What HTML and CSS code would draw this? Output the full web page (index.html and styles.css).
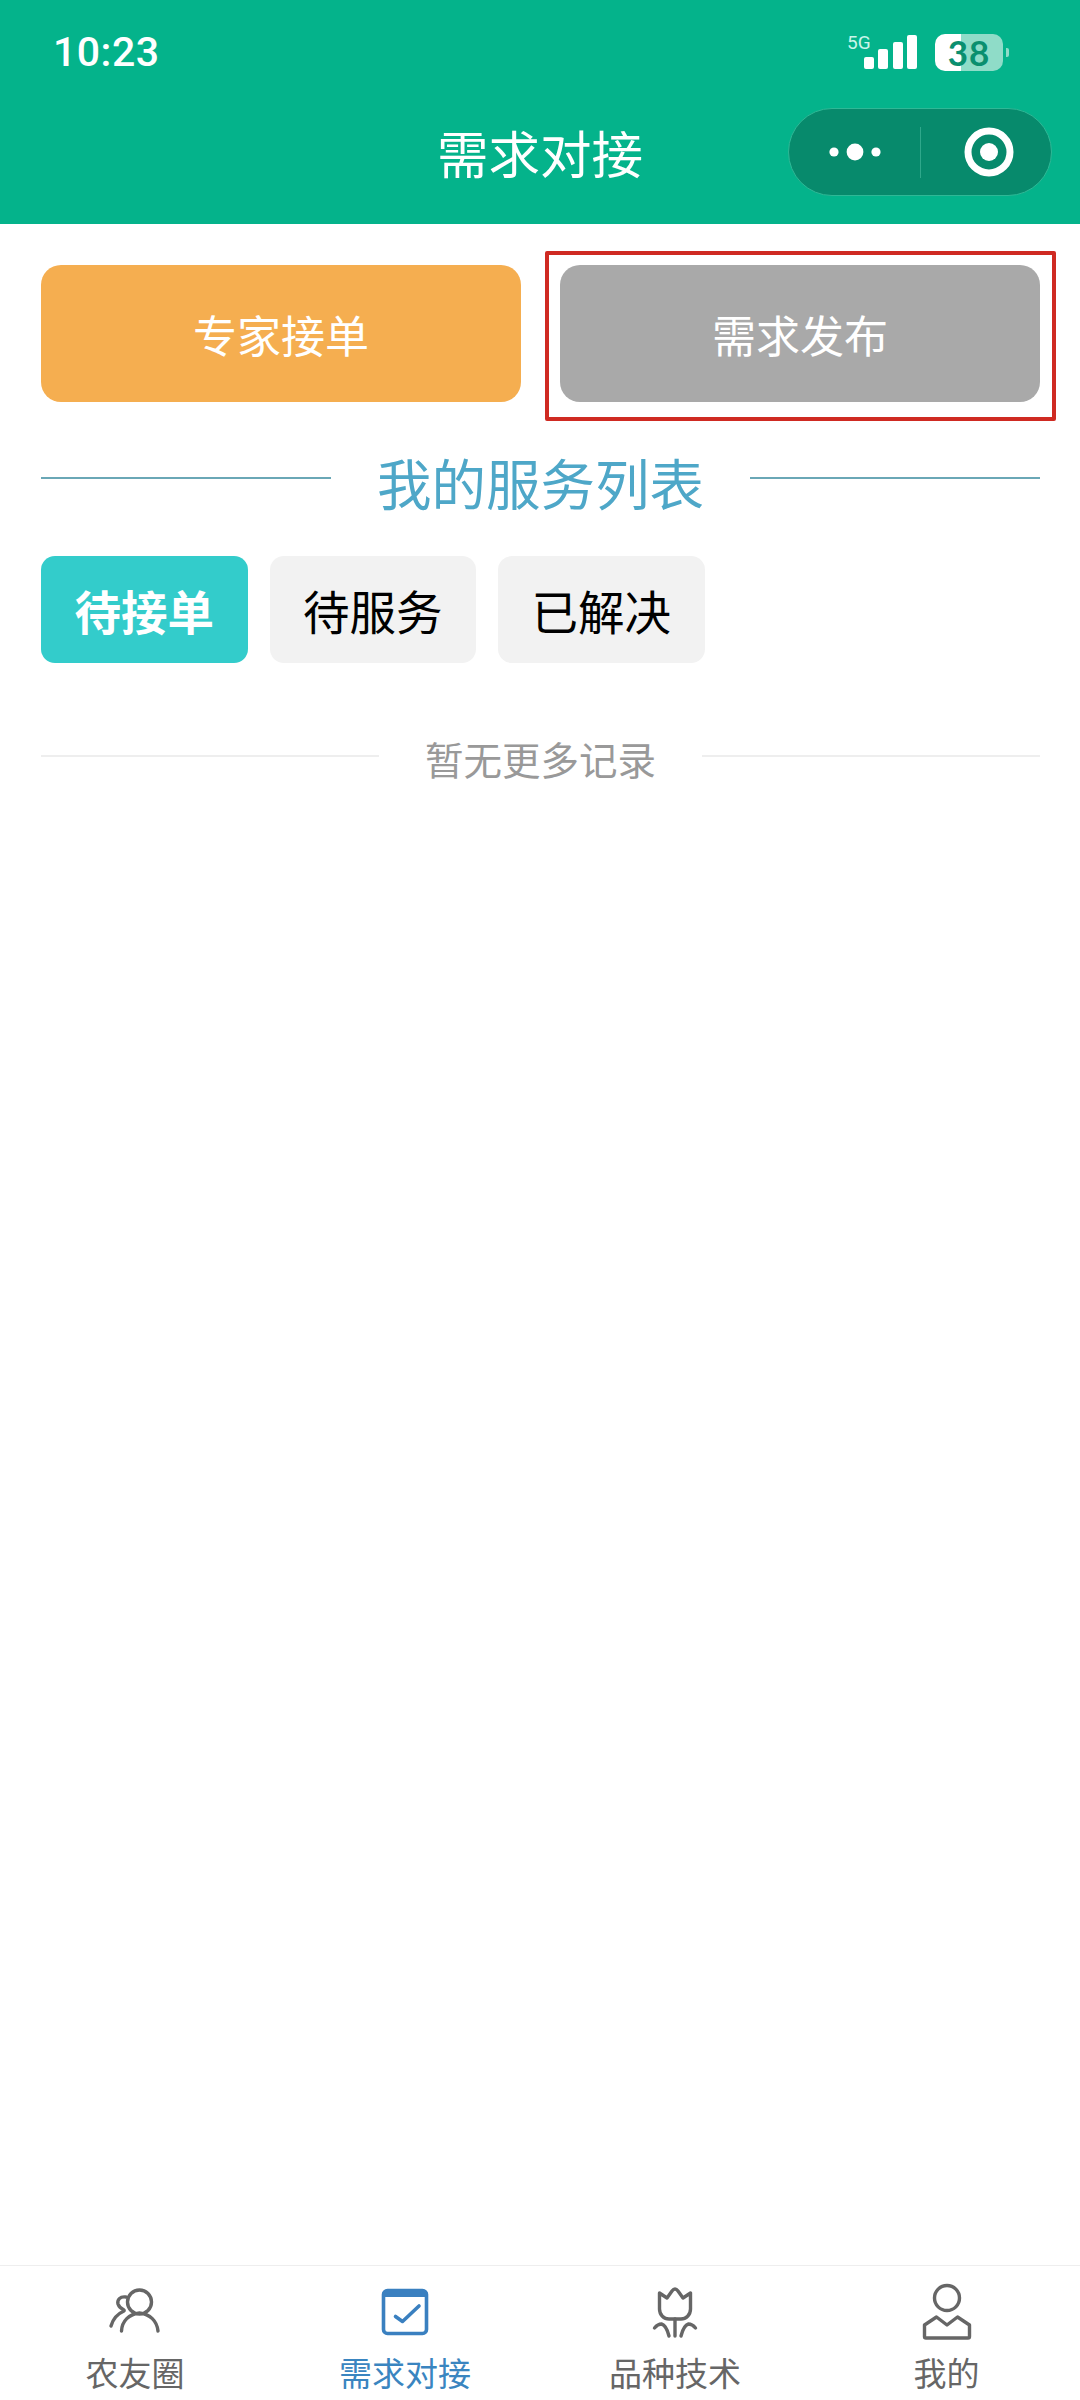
FILE: index.html
```html
<!DOCTYPE html>
<html lang="zh-CN">
<head>
<meta charset="utf-8">
<title>需求对接</title>
<link rel="stylesheet" href="styles.css">
</head>
<body>
<div class="page">
  <header class="header">
    <div class="status">
      <span class="time">10:23</span>
      <div class="status-right">
        <div class="signal">
          <span class="net">5G</span>
          <i class="bar b1"></i><i class="bar b2"></i><i class="bar b3"></i><i class="bar b4"></i>
        </div>
        <div class="battery"><span>38</span></div>
      </div>
    </div>
    <div class="nav">
      <h1 class="nav-title">需求对接</h1>
      <div class="capsule">
        <div class="capsule-cell">
          <svg class="dots" viewBox="0 0 60 20" width="60" height="20"><circle cx="9" cy="10" r="4.6"/><circle cx="30" cy="10" r="8.4"/><circle cx="51" cy="10" r="4.6"/></svg>
        </div>
        <div class="capsule-cell">
          <svg class="target" viewBox="0 0 52 52" width="52" height="52"><circle class="ring" cx="26" cy="26" r="21"/><circle cx="26" cy="26" r="9"/></svg>
        </div>
      </div>
    </div>
  </header>

  <main class="main">
    <div class="actions">
      <button class="action action-orange">专家接单</button>
      <button class="action action-gray">需求发布</button>
      <div class="annot"></div>
    </div>
    <div class="section-title">
      <span class="rule"></span>
      <h2>我的服务列表</h2>
      <span class="rule"></span>
    </div>
    <div class="tabs">
      <div class="tab active">待接单</div>
      <div class="tab">待服务</div>
      <div class="tab">已解决</div>
    </div>
    <div class="empty">
      <span class="empty-rule"></span>
      <span class="empty-text">暂无更多记录</span>
      <span class="empty-rule"></span>
    </div>
  </main>

  <nav class="tabbar">
    <div class="tabbar-item">
      <svg class="ico" viewBox="0 0 60 60" width="60" height="60"><circle cx="34.500" cy="22" r="12"/><path d="M16.500 51C17 41 24 34 34.500 33C45 34 52 41 53 51"/><path d="M6 46C8 39 12 34 19 31"/><path d="M21 17C15 16 12 20 13 24C14 27 17 29 19 30"/></svg>
      <span>农友圈</span>
    </div>
    <div class="tabbar-item on">
      <svg class="ico" viewBox="0 0 60 60" width="60" height="60"><rect x="8.500" y="10.500" width="43" height="43" rx="4"/><path class="thick" d="M9 14H51"/><path d="M20.500 36.500L27.500 41.500L44 26"/></svg>
      <span>需求对接</span>
    </div>
    <div class="tabbar-item">
      <svg class="ico" viewBox="0 0 60 60" width="60" height="60"><path d="M14.500 13L22 18L27 11Q30 7 33 11L38 18L45.500 13V29C45.500 35 41 39 36 39H24C19 39 14.500 35 14.500 29Z"/><path d="M30 39V56"/><path d="M9.500 48C12 45 14 44 16.500 44C20 45 22.500 50 24 56"/><path d="M50.500 48C48 45 46 44 43.500 44C40 45 37.500 50 36 56"/></svg>
      <span>品种技术</span>
    </div>
    <div class="tabbar-item nudge">
      <svg class="ico" viewBox="0 0 60 60" width="60" height="60"><circle cx="30" cy="18" r="12.500"/><path d="M7.500 45L19.500 37L30 45L40.500 37L52.500 45V56.500C52.500 57.500 52 58 51 58H9C8 58 7.500 57.500 7.500 56.500Z"/></svg>
      <span>我的</span>
    </div>
  </nav>
</div>
</body>
</html>
```

FILE: styles.css
```css
* { box-sizing: border-box; }
html, body { margin: 0; padding: 0; }
body {
  width: 1080px;
  height: 2400px;
  background: #fff;
  font-family: "Noto Sans CJK SC", "Noto Sans", sans-serif;
  overflow: hidden;
}
.page { width: 1080px; height: 2400px; display: flex; flex-direction: column; }

/* header */
.header { height: 224px; background: #04b38b; color: #fff; flex: none; }
.status {
  height: 80px;
  padding: 24px 77px 0 53px;
  display: flex;
  justify-content: space-between;
  align-items: center;
}
.time { font-family: Roboto, sans-serif; font-weight: 500; font-size: 41px; line-height: 56px; letter-spacing: 0.500px; }
.status-right { display: flex; align-items: center; gap: 18px; }
.signal { position: relative; display: flex; align-items: flex-end; gap: 4.300px; height: 34px; }
.net {
  position: absolute; left: -17px; top: -1px;
  font-family: Roboto, sans-serif; font-size: 19px; line-height: 18px; color: #c9f5ea;
}
.bar { display: block; width: 10px; background: #fff; border-radius: 2px; }
.b1 { height: 12px; }
.b2 { height: 20px; }
.b3 { height: 27px; }
.b4 { height: 34px; }
.battery {
  position: relative;
  width: 68px; height: 37px;
  border-radius: 10px;
  background: linear-gradient(90deg, #fff 0 26px, #8fdcc8 26px 100%);
  display: flex; align-items: center; justify-content: center;
}
.battery span {
  font-family: Lato, Roboto, sans-serif; font-weight: 700; font-size: 35px; line-height: 37px;
  color: #0a8f6f; letter-spacing: 1px;
}
.battery::after {
  content: ""; position: absolute; right: -6px; top: 14px;
  width: 3px; height: 9px; background: #8fdcc8; border-radius: 0 2px 2px 0;
}
.nav {
  height: 144px;
  display: grid;
  grid-template-columns: 1fr auto 1fr;
  align-items: center;
  padding-right: 28px;
}
.nav-title {
  grid-column: 2;
  margin: 0 0 0 28px;
  font-size: 51.500px; line-height: 72px; font-weight: 400; color: #fff;
}
.capsule {
  grid-column: 3;
  justify-self: end;
  width: 264px; height: 88px;
  border-radius: 44px;
  background: #078a6c;
  border: 1px solid #2fb896;
  display: flex;
}
.capsule-cell { flex: 1; display: flex; align-items: center; justify-content: center; }
.capsule-cell + .capsule-cell { position: relative; }
.capsule-cell + .capsule-cell::before {
  content: ""; position: absolute; left: 0; top: 18px; height: 51px; width: 1px; background: #2fa88b;
}
.dots { fill: #fff; }
.target { fill: #fff; margin-left: 6px; }
.target .ring { fill: none; stroke: #fff; stroke-width: 7; }

/* main */
.main { flex: 1; padding: 41px 40px 0 41px; }
.actions { position: relative; display: flex; gap: 39px; }
.action {
  flex: 1; height: 137px; border: 0; border-radius: 20px; color: #fff;
  font: 400 44px/60px "Noto Sans CJK SC", sans-serif; padding: 0;
}
.action-orange { background: #f5ae50; }
.action-gray { background: #a9a9a9; }
.annot {
  position: absolute; left: 504px; top: -14px; width: 511px; height: 170px;
  border: 4px solid #cf2a22; border-radius: 2px;
}
.section-title { display: flex; align-items: center; gap: 46px; margin-top: 42px; height: 76px; }
.section-title h2 { margin: 0; font-size: 54.500px; line-height: 76px; font-weight: 400; color: #4ea7c8; flex: none; }
.rule { flex: 1; height: 2px; background: #6aa7b6; margin-bottom: 8px; }
.tabs { display: flex; gap: 22px; margin-top: 36px; }
.tab {
  width: 206.500px; height: 107px; border-radius: 14px; background: #f2f2f2; color: #000;
  font-size: 46.500px; line-height: 107px; text-align: center;
}
.tab.active { background: #33cccb; color: #fff; font-weight: 700; }
.empty { display: flex; align-items: center; gap: 46px; margin-top: 67px; height: 56px; }
.empty-rule { flex: 1; height: 2px; background: #eeeeee; margin-bottom: 4px; }
.empty-text { font-size: 38.500px; line-height: 56px; color: #999; flex: none; }

/* tabbar */
.tabbar {
  flex: none;
  height: 135px;
  border-top: 1px solid #eeeeee;
  display: grid;
  grid-template-columns: repeat(4, 1fr);
  padding-top: 14px;
  background: #fff;
}
.tabbar-item {
  display: flex; flex-direction: column; align-items: center;
  color: #666; font-size: 33px; line-height: 44px;
}
.tabbar-item span { margin-top: 10px; }
.tabbar-item.nudge { padding-left: 3px; }
.ico { display: block; fill: none; stroke: #666; stroke-width: 3.400; stroke-linecap: round; stroke-linejoin: round; }
.tabbar-item.on { color: #3a85c0; }
.on .ico { stroke: #3a80c0; stroke-width: 3.600; }
.on .ico .thick { stroke-width: 6; stroke-linecap: butt; }
```
